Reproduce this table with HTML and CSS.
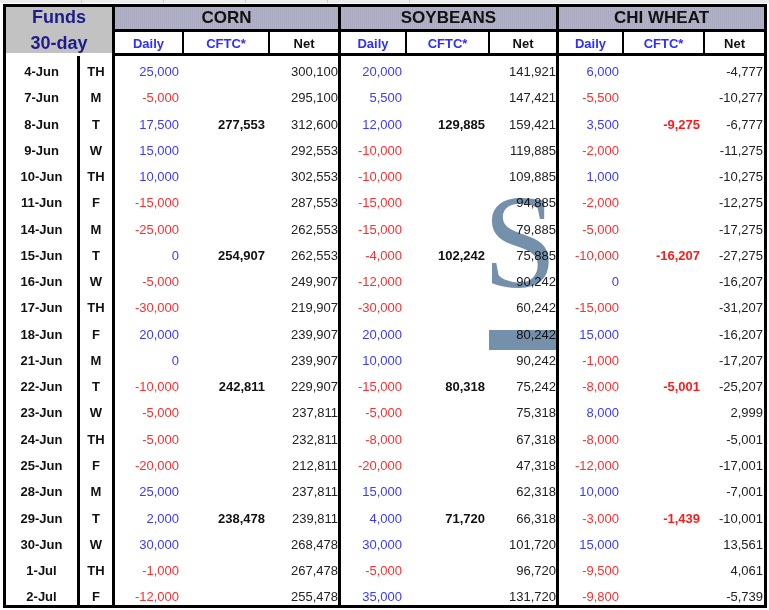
FILE: index.html
```html
<!DOCTYPE html>
<html>
<head>
<meta charset="utf-8">
<link rel="stylesheet" href="styles.css">
</head>
<body>
<div class="ruler"></div>
<div class="sheet">
  <div class="funds"><div class="funds-text">Funds<br>30-day</div></div>
  <div class="group-title">CORN</div>
  <div class="group-title">SOYBEANS</div>
  <div class="group-title">CHI WHEAT</div>

  <div class="sub first blue">Daily</div><div class="sub blue">CFTC*</div><div class="sub">Net</div>
  <div class="sub first blue">Daily</div><div class="sub blue">CFTC*</div><div class="sub">Net</div>
  <div class="sub first blue">Daily</div><div class="sub blue">CFTC*</div><div class="sub">Net</div>

  <div class="c d">4-Jun</div><div class="c w">TH</div>
  <div class="c dl pos">25,000</div><div class="c cf"></div><div class="c nt">300,100</div>
  <div class="c dl pos">20,000</div><div class="c cf"></div><div class="c nt">141,921</div>
  <div class="c dl pos">6,000</div><div class="c cf"></div><div class="c nt last">-4,777</div>

  <div class="c d">7-Jun</div><div class="c w">M</div>
  <div class="c dl neg">-5,000</div><div class="c cf"></div><div class="c nt">295,100</div>
  <div class="c dl pos">5,500</div><div class="c cf"></div><div class="c nt">147,421</div>
  <div class="c dl neg">-5,500</div><div class="c cf"></div><div class="c nt last">-10,277</div>

  <div class="c d">8-Jun</div><div class="c w">T</div>
  <div class="c dl pos">17,500</div><div class="c cf">277,553</div><div class="c nt">312,600</div>
  <div class="c dl pos">12,000</div><div class="c cf">129,885</div><div class="c nt">159,421</div>
  <div class="c dl pos">3,500</div><div class="c cf red">-9,275</div><div class="c nt last">-6,777</div>

  <div class="c d">9-Jun</div><div class="c w">W</div>
  <div class="c dl pos">15,000</div><div class="c cf"></div><div class="c nt">292,553</div>
  <div class="c dl neg">-10,000</div><div class="c cf"></div><div class="c nt">119,885</div>
  <div class="c dl neg">-2,000</div><div class="c cf"></div><div class="c nt last">-11,275</div>

  <div class="c d">10-Jun</div><div class="c w">TH</div>
  <div class="c dl pos">10,000</div><div class="c cf"></div><div class="c nt">302,553</div>
  <div class="c dl neg">-10,000</div><div class="c cf"></div><div class="c nt">109,885</div>
  <div class="c dl pos">1,000</div><div class="c cf"></div><div class="c nt last">-10,275</div>

  <div class="c d">11-Jun</div><div class="c w">F</div>
  <div class="c dl neg">-15,000</div><div class="c cf"></div><div class="c nt">287,553</div>
  <div class="c dl neg">-15,000</div><div class="c cf"></div><div class="c nt">94,885</div>
  <div class="c dl neg">-2,000</div><div class="c cf"></div><div class="c nt last">-12,275</div>

  <div class="c d">14-Jun</div><div class="c w">M</div>
  <div class="c dl neg">-25,000</div><div class="c cf"></div><div class="c nt">262,553</div>
  <div class="c dl neg">-15,000</div><div class="c cf"></div><div class="c nt">79,885</div>
  <div class="c dl neg">-5,000</div><div class="c cf"></div><div class="c nt last">-17,275</div>

  <div class="c d">15-Jun</div><div class="c w">T</div>
  <div class="c dl pos">0</div><div class="c cf">254,907</div><div class="c nt">262,553</div>
  <div class="c dl neg">-4,000</div><div class="c cf">102,242</div><div class="c nt">75,885</div>
  <div class="c dl neg">-10,000</div><div class="c cf red">-16,207</div><div class="c nt last">-27,275</div>

  <div class="c d">16-Jun</div><div class="c w">W</div>
  <div class="c dl neg">-5,000</div><div class="c cf"></div><div class="c nt">249,907</div>
  <div class="c dl neg">-12,000</div><div class="c cf"></div><div class="c nt">90,242</div>
  <div class="c dl pos">0</div><div class="c cf"></div><div class="c nt last">-16,207</div>

  <div class="c d">17-Jun</div><div class="c w">TH</div>
  <div class="c dl neg">-30,000</div><div class="c cf"></div><div class="c nt">219,907</div>
  <div class="c dl neg">-30,000</div><div class="c cf"></div><div class="c nt">60,242</div>
  <div class="c dl neg">-15,000</div><div class="c cf"></div><div class="c nt last">-31,207</div>

  <div class="c d">18-Jun</div><div class="c w">F</div>
  <div class="c dl pos">20,000</div><div class="c cf"></div><div class="c nt">239,907</div>
  <div class="c dl pos">20,000</div><div class="c cf"></div><div class="c nt">80,242</div>
  <div class="c dl pos">15,000</div><div class="c cf"></div><div class="c nt last">-16,207</div>

  <div class="c d">21-Jun</div><div class="c w">M</div>
  <div class="c dl pos">0</div><div class="c cf"></div><div class="c nt">239,907</div>
  <div class="c dl pos">10,000</div><div class="c cf"></div><div class="c nt">90,242</div>
  <div class="c dl neg">-1,000</div><div class="c cf"></div><div class="c nt last">-17,207</div>

  <div class="c d">22-Jun</div><div class="c w">T</div>
  <div class="c dl neg">-10,000</div><div class="c cf">242,811</div><div class="c nt">229,907</div>
  <div class="c dl neg">-15,000</div><div class="c cf">80,318</div><div class="c nt">75,242</div>
  <div class="c dl neg">-8,000</div><div class="c cf red">-5,001</div><div class="c nt last">-25,207</div>

  <div class="c d">23-Jun</div><div class="c w">W</div>
  <div class="c dl neg">-5,000</div><div class="c cf"></div><div class="c nt">237,811</div>
  <div class="c dl neg">-5,000</div><div class="c cf"></div><div class="c nt">75,318</div>
  <div class="c dl pos">8,000</div><div class="c cf"></div><div class="c nt last">2,999</div>

  <div class="c d">24-Jun</div><div class="c w">TH</div>
  <div class="c dl neg">-5,000</div><div class="c cf"></div><div class="c nt">232,811</div>
  <div class="c dl neg">-8,000</div><div class="c cf"></div><div class="c nt">67,318</div>
  <div class="c dl neg">-8,000</div><div class="c cf"></div><div class="c nt last">-5,001</div>

  <div class="c d">25-Jun</div><div class="c w">F</div>
  <div class="c dl neg">-20,000</div><div class="c cf"></div><div class="c nt">212,811</div>
  <div class="c dl neg">-20,000</div><div class="c cf"></div><div class="c nt">47,318</div>
  <div class="c dl neg">-12,000</div><div class="c cf"></div><div class="c nt last">-17,001</div>

  <div class="c d">28-Jun</div><div class="c w">M</div>
  <div class="c dl pos">25,000</div><div class="c cf"></div><div class="c nt">237,811</div>
  <div class="c dl pos">15,000</div><div class="c cf"></div><div class="c nt">62,318</div>
  <div class="c dl pos">10,000</div><div class="c cf"></div><div class="c nt last">-7,001</div>

  <div class="c d">29-Jun</div><div class="c w">T</div>
  <div class="c dl pos">2,000</div><div class="c cf">238,478</div><div class="c nt">239,811</div>
  <div class="c dl pos">4,000</div><div class="c cf">71,720</div><div class="c nt">66,318</div>
  <div class="c dl neg">-3,000</div><div class="c cf red">-1,439</div><div class="c nt last">-10,001</div>

  <div class="c d">30-Jun</div><div class="c w">W</div>
  <div class="c dl pos">30,000</div><div class="c cf"></div><div class="c nt">268,478</div>
  <div class="c dl pos">30,000</div><div class="c cf"></div><div class="c nt">101,720</div>
  <div class="c dl pos">15,000</div><div class="c cf"></div><div class="c nt last">13,561</div>

  <div class="c d">1-Jul</div><div class="c w">TH</div>
  <div class="c dl neg">-1,000</div><div class="c cf"></div><div class="c nt">267,478</div>
  <div class="c dl neg">-5,000</div><div class="c cf"></div><div class="c nt">96,720</div>
  <div class="c dl neg">-9,500</div><div class="c cf"></div><div class="c nt last">4,061</div>

  <div class="c d">2-Jul</div><div class="c w">F</div>
  <div class="c dl neg">-12,000</div><div class="c cf"></div><div class="c nt">255,478</div>
  <div class="c dl pos">35,000</div><div class="c cf"></div><div class="c nt">131,720</div>
  <div class="c dl neg">-9,800</div><div class="c cf"></div><div class="c nt last">-5,739</div>

  <div class="mark-s">S</div>
  <div class="mark-bar"></div>
</div>
</body>
</html>
```

FILE: styles.css
```css
html, body {
  margin: 0;
  padding: 0;
  background: #ffffff;
}

body {
  font-family: "Liberation Sans", Arial, sans-serif;
  color: #1e1e1e;
  width: 769px;
  height: 610px;
  overflow: hidden;
}

.ruler {
  height: 3px;
  margin-bottom: 1px;
  width: 769px;
  background:
    repeating-linear-gradient(90deg, transparent 0 81px, #c8c8c8 81px 82px) 0 0 / 482px 3px no-repeat,
    #ececec;
}

.sheet {
  position: relative;
  margin-left: 3px;
  width: 758px;
  border: 3px solid #000;
  display: grid;
  grid-template-columns: 71px 35px 70px 86px 70px 67px 83px 68px 66px 81px 61px;
  grid-template-rows: 25px 24px repeat(20, 26.28px) 23.2px;
  background: #fff;
}

.funds {
  grid-column: 1 / 3;
  grid-row: 1 / 3;
  background: #c2c2c2;
  border-bottom: 3px solid #fff;
  text-align: center;
  font-weight: bold;
  font-size: 18px;
  color: #1c1c8a;
}

.funds-text {
  line-height: 26px;
  margin-top: -3px;
}

.group-title {
  grid-column: span 3;
  border-left: 3px solid #000;
  border-bottom: 3px solid #000;
  background: repeating-linear-gradient(90deg, #b2b2c7 0 1px, #a9a9bf 1px 2px);
  text-align: center;
  font-weight: bold;
  font-size: 17px;
  line-height: 22px;
  color: #111;
}

.sub {
  border-left: 2px solid #000;
  border-bottom: 3px solid #000;
  text-align: center;
  font-weight: bold;
  font-size: 13px;
  line-height: 19px;
  padding-top: 2px;
  color: #111;
}

.sub.first {
  border-left-width: 3px;
}

.sub.blue {
  color: #2e2eff;
}

.c {
  font-size: 13px;
  line-height: 22px;
  padding-top: 5px;
  text-align: right;
  white-space: nowrap;
  position: relative;
  z-index: 1;
}

.d {
  text-align: center;
  font-weight: bold;
  color: #111;
}

.w {
  text-align: center;
  font-weight: bold;
  color: #111;
  border-left: 3px solid #000;
}

.dl {
  border-left: 3px solid #000;
  padding-right: 3px;
}

.cf {
  padding-right: 3px;
  font-weight: bold;
  color: #111;
}

.cf.red {
  color: #ff1a1a;
}

.nt {
  padding-right: 0;
  color: #222;
}

.nt.last {
  padding-right: 1px;
}

.pos {
  color: #3a3aff;
}

.neg {
  color: #ff2d2d;
}

.mark-s {
  position: absolute;
  left: 477px;
  top: 169px;
  font-family: "Liberation Serif", "Times New Roman", serif;
  font-size: 133px;
  line-height: 1;
  color: #7590ab;
  mix-blend-mode: multiply;
  z-index: 2;
  pointer-events: none;
}

.mark-bar {
  position: absolute;
  left: 483px;
  top: 323px;
  width: 67px;
  height: 20px;
  background: #7590ab;
  mix-blend-mode: multiply;
  z-index: 2;
}
```
